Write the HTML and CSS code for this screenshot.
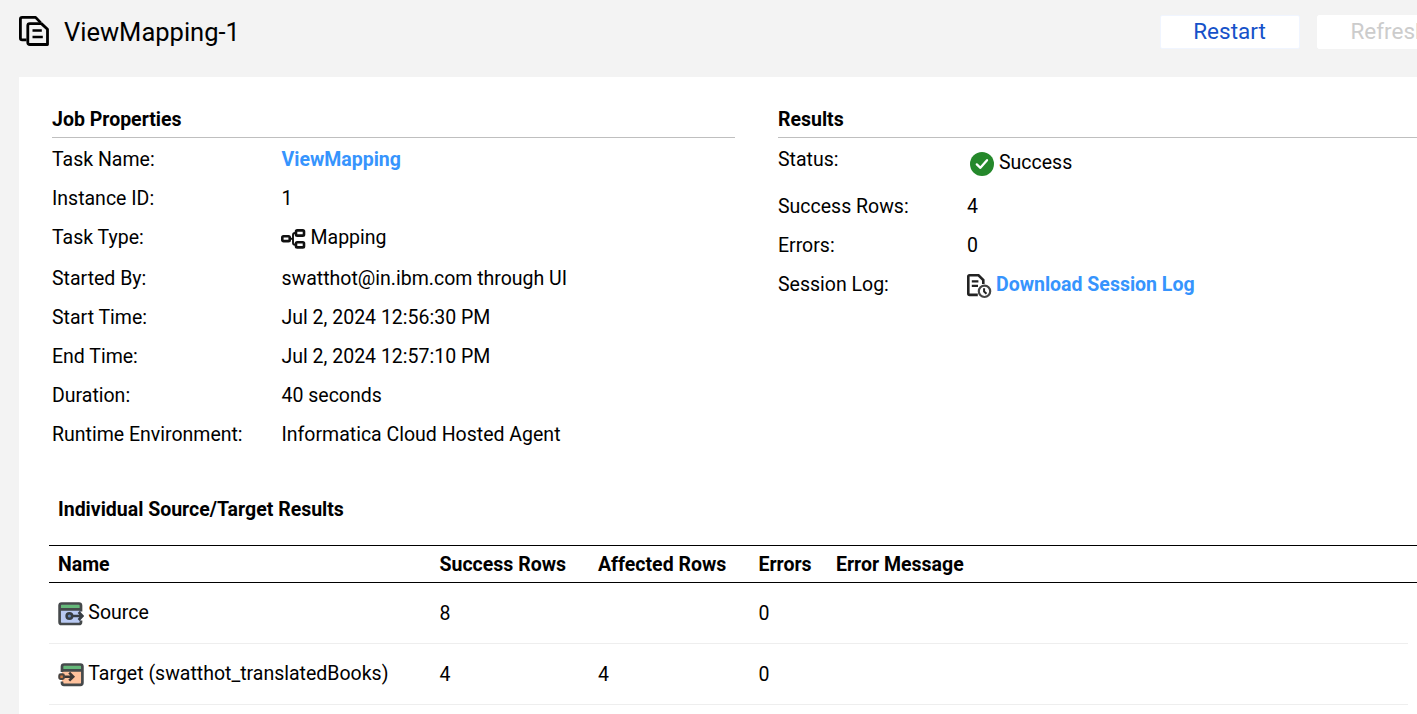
FILE: index.html
```html
<!DOCTYPE html>
<html lang="en">
<head>
<meta charset="utf-8">
<title>ViewMapping-1</title>
<link rel="stylesheet" href="styles.css">
</head>
<body>
<header class="topbar">
  <svg class="page-icon" width="30" height="30" viewBox="0 0 30 30" fill="none" stroke="#000" stroke-width="2.8" stroke-linejoin="round">
    <path d="M7.5 23.9H3.2Q1.4 23.9 1.4 22V3.2Q1.4 1.4 3.2 1.4H16.6L21.6 6.6"/>
    <path d="M10.8 7.6H22.4L28.5 13.2V28.5H10.8Q8.8 28.5 8.8 26.5V9.6Q8.8 7.6 10.8 7.6Z"/>
    <path d="M13.5 14.6H22.8M13.5 21H23.8" stroke-width="2.5"/>
  </svg>
  <h1 class="title">ViewMapping-1</h1>
  <div class="actions">
    <button class="btn btn-primary">Restart</button>
    <button class="btn btn-disabled" disabled>Refresh</button>
  </div>
</header>
<main class="panel">
  <div class="columns">
    <section>
      <h2 class="heading">Job Properties</h2>
      <dl class="props">
        <div class="row"><dt>Task Name:</dt><dd><a class="link">ViewMapping</a></dd></div>
        <div class="row"><dt>Instance ID:</dt><dd>1</dd></div>
        <div class="row row-type"><dt>Task Type:</dt><dd class="with-icon">
          <svg class="map-icon" width="25" height="20" viewBox="0 0 25 20" fill="none" stroke="#111" stroke-width="2.6">
            <rect x="1.3" y="7.3" width="7.4" height="4.8" rx="1.2"/>
            <rect x="15" y="1.4" width="8" height="5.2" rx="1.2"/>
            <rect x="15" y="13.2" width="8" height="5.2" rx="1.2"/>
            <path d="M8.6 9.7H12M15.5 4H14Q12 4 12 6V13.8Q12 15.8 14 15.8H15.5" stroke-width="1.9"/>
          </svg>Mapping</dd></div>
        <div class="row"><dt>Started By:</dt><dd>swatthot@in.ibm.com through UI</dd></div>
        <div class="row"><dt>Start Time:</dt><dd>Jul 2, 2024 12:56:30 PM</dd></div>
        <div class="row"><dt>End Time:</dt><dd>Jul 2, 2024 12:57:10 PM</dd></div>
        <div class="row"><dt>Duration:</dt><dd>40 seconds</dd></div>
        <div class="row"><dt>Runtime Environment:</dt><dd>Informatica Cloud Hosted Agent</dd></div>
      </dl>
    </section>
    <section>
      <h2 class="heading">Results</h2>
      <dl class="props results">
        <div class="row row-status"><dt>Status:</dt><dd class="with-icon status">
          <svg class="ok-icon" width="24" height="24" viewBox="0 0 24 24" fill="none">
            <circle cx="12" cy="12" r="12" fill="#25882b"/>
            <path d="M6.8 12.4L10.4 15.8L17 8.2" stroke="#fff" stroke-width="2.3" stroke-linecap="round" stroke-linejoin="round"/>
          </svg>Success</dd></div>
        <div class="row"><dt>Success Rows:</dt><dd>4</dd></div>
        <div class="row"><dt>Errors:</dt><dd>0</dd></div>
        <div class="row"><dt>Session Log:</dt><dd class="with-icon">
          <svg class="log-icon" width="25" height="25" viewBox="0 0 25 25" fill="none" stroke="#222" stroke-width="2.6">
            <path d="M10.8 20.9H2.6Q1.3 20.9 1.3 19.5V2.6Q1.3 1.3 2.6 1.3H11.5L16.3 6V10"/>
            <path d="M4.8 7.3H11.4M4.8 11.8H11" stroke-width="2.3"/>
            <circle cx="17.5" cy="17.3" r="5.7" stroke="#444" stroke-width="2.2" fill="#fff"/>
            <path d="M17.1 14.3V17.6L19.5 19.8" stroke-width="2"/>
          </svg><a class="link">Download Session Log</a></dd></div>
      </dl>
    </section>
  </div>
  <section class="individual">
    <h2 class="subheading">Individual Source/Target Results</h2>
    <div class="grid-row grid-head">
      <span>Name</span><span>Success Rows</span><span>Affected Rows</span><span>Errors</span><span>Error Message</span>
    </div>
    <div class="grid-row grid-body">
      <span class="name">
        <svg class="row-icon" width="26" height="24" viewBox="0 0 26 24" fill="none">
          <rect x="1.5" y="1.3" width="21.5" height="20.4" rx="2" fill="#b9caf3"/>
          <path d="M2.4 2.2H22V7H2.4Z" fill="#65b879"/>
          <path d="M23 9.5V3.5Q23 1.5 21 1.5H3.6Q1.6 1.5 1.6 3.5V20Q1.6 22 3.6 22H21Q23 22 23 20V18.5M1.6 7.4H23" stroke="#45494b" stroke-width="2.7"/>
          <path d="M14 14H24M20.6 10L24.4 14L20.6 18" stroke="#373d43" stroke-width="2.6"/>
          <circle cx="11.4" cy="14" r="2.8" fill="#6486bd" stroke="#373d43" stroke-width="2.5"/>
        </svg>Source</span>
      <span>8</span><span></span><span>0</span><span></span>
    </div>
    <div class="grid-row grid-body">
      <span class="name">
        <svg class="row-icon" width="26" height="24" viewBox="0 0 26 24" fill="none">
          <rect x="4" y="1.3" width="20.2" height="20.4" rx="2" fill="#ffc29d"/>
          <path d="M5 2.2H23.6V7H5Z" fill="#65b879"/>
          <path d="M4 9V3.5Q4 1.5 6 1.5H22.4Q24.4 1.5 24.4 3.5V19.8Q24.4 21.8 22.4 21.8H6Q4 21.8 4 19.8V18.4M4 7.4H24.4" stroke="#45494b" stroke-width="2.7"/>
          <path d="M5 13.7H14.5M11.2 9.7L15.2 13.7L11.2 17.7" stroke="#3c3735" stroke-width="2.6"/>
          <rect x="1.3" y="11.4" width="4.6" height="4.6" rx="1.4" fill="#d4793f" stroke="#49433f" stroke-width="2.1"/>
        </svg>Target (swatthot_translatedBooks)</span>
      <span>4</span><span>4</span><span>0</span><span></span>
    </div>
  </section>
</main>
</body>
</html>
```
FILE: styles.css
```css
* { box-sizing: border-box; }
body {
  margin: 0;
  height: 714px;
  overflow: hidden;
  background: #f3f3f3;
  color: #000;
  font: 19.5px/24px Roboto, "Liberation Sans", sans-serif;
  display: flex;
  flex-direction: column;
}
svg { flex: none; display: block; }
.topbar {
  flex: none;
  height: 77px;
  display: flex;
  align-items: flex-start;
  padding: 15px 0 0 19px;
}
.page-icon { margin-top: 1px; }
.title {
  margin: 1px 0 0 15px;
  font-size: 25.5px;
  font-weight: 400;
  line-height: 32px;
}
.actions {
  flex: none;
  margin-left: auto;
  margin-right: -44px;
  display: flex;
  gap: 17px;
}
.btn {
  width: 140px;
  height: 34px;
  padding: 0 0 2px;
  border: 1px solid #fff;
  border-radius: 2px;
  background: #fff;
  font: 22.5px/30px Roboto, "Liberation Sans", sans-serif;
}
.btn-primary { color: #1551c9; border-color: #f0f5ff; padding-right: 1px; }
.btn-disabled { color: #ccc; width: 144px; }
.panel {
  flex: 1;
  margin-left: 19px;
  background: #fff;
  padding-top: 31px;
}
.columns {
  display: grid;
  grid-template-columns: 683px 1fr;
  column-gap: 43px;
  padding-left: 33px;
}
.heading, .subheading {
  margin: 0;
  font-size: 19.5px;
  font-weight: 700;
}
.heading {
  height: 30px;
  border-bottom: 1px solid #bfbfbf;
}
.props { margin: 0; padding-top: 10px; }
.row {
  display: grid;
  grid-template-columns: 229.5px 1fr;
  height: 39px;
}
.results .row { grid-template-columns: 189px 1fr; }
.row-type { height: 41px; }
.results .row-status { height: 47px; }
dd { margin: 0; }
.with-icon { display: flex; align-items: flex-start; }
.map-icon { margin: 3px 5px 0 -1px; }
.status { padding: 3px 0 0 3px; }
.ok-icon { margin: 1px 5px 0 0; }
.log-icon { margin: 1px 4px 0 0; }
.link { color: #3694fd; font-weight: 700; }
.individual { padding: 36px 0 0 30px; }
.subheading { padding: 0 0 23px 9px; }
.grid-row {
  display: grid;
  grid-template-columns: 381.5px 158.5px 160.5px 77.5px 1fr;
  align-items: center;
  padding: 2px 0 0 9px;
}
.grid-head {
  height: 38px;
  border-top: 1px solid #000;
  border-bottom: 1px solid #000;
  font-weight: 700;
}
.grid-body {
  height: 61px;
  margin-right: 9px;
  border-bottom: 1px solid #eee;
}
.name { display: flex; align-items: flex-start; height: 26px; }
.row-icon { margin: 1px 4.3px 0 0; }
```
